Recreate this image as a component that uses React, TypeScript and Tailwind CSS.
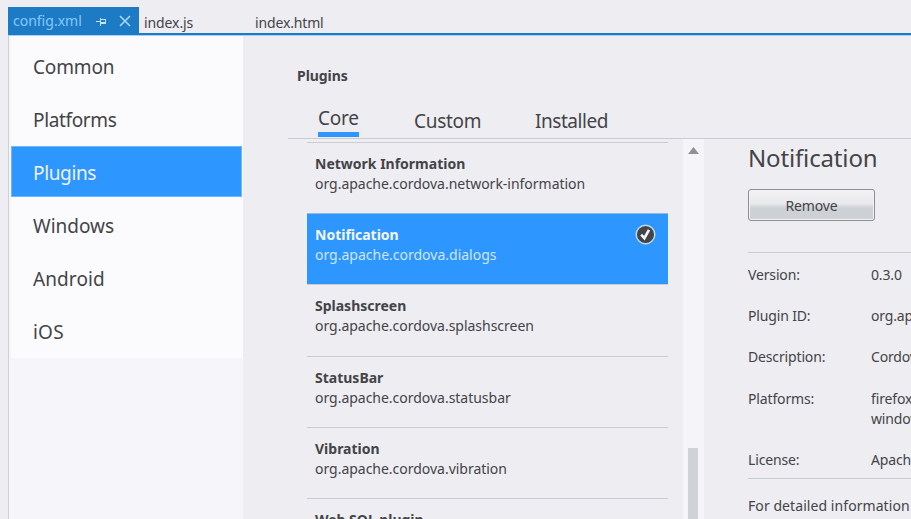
import type { ReactNode } from "react";

const navItems = [
  { label: "Common", spacing: "tracking-[-0.15px]" },
  { label: "Platforms", spacing: "tracking-[-0.35px]" },
  { label: "Plugins", spacing: "tracking-[-0.35px]" },
  { label: "Windows", spacing: "tracking-normal" },
  { label: "Android", spacing: "tracking-[0.1px]" },
  { label: "iOS", spacing: "tracking-[0.2px]" },
];

const plugins = [
  { name: "Network Information", id: "org.apache.cordova.network-information" },
  { name: "Notification", id: "org.apache.cordova.dialogs" },
  { name: "Splashscreen", id: "org.apache.cordova.splashscreen" },
  { name: "StatusBar", id: "org.apache.cordova.statusbar" },
  { name: "Vibration", id: "org.apache.cordova.vibration" },
  { name: "Web SQL plugin", id: "" },
];

function PinIcon() {
  return (
    <svg width="11" height="9" viewBox="0 0 11 9" fill="none" stroke="#c3e3fb" shapeRendering="crispEdges">
      <path d="M0 4.5h4M4.5 0.5v8M5 2.5h5M9.5 2v5M5 5.5h5M5 6.5h5" />
    </svg>
  );
}

function CloseIcon() {
  return (
    <svg width="12" height="12" viewBox="0 0 12 12" fill="none" stroke="#a9d7fb" strokeWidth="1.6">
      <path d="M1 1l10 10M11 1L1 11" />
    </svg>
  );
}

function CheckBadge() {
  return (
    <svg width="21" height="21" viewBox="0 0 21 21">
      <circle cx="10.5" cy="10.5" r="9.3" fill="#434447" stroke="#bfd6e8" strokeWidth="1.5" />
      <path d="M6.2 10.6l3.2 3.6 4.6-8.4" fill="none" stroke="#f4f4f8" strokeWidth="2.7" />
    </svg>
  );
}

function Tabs() {
  return (
    <div className="ml-2 mt-[7px] flex h-[28px] shrink-0 border-b-2 border-[#1c7bc4] text-[14px] leading-[28px]">
      <div className="flex w-[131px] items-center bg-[#1c7bc4] pl-[5px] pt-[2px] text-[#86c8fb]">
        <span className="w-[83px]">config.xml</span>
        <PinIcon />
        <span className="ml-[12px]">
          <CloseIcon />
        </span>
      </div>
      <span className="w-[111px] pl-[5px] pt-[2px] tracking-[-0.1px]">index.js</span>
      <span className="pl-[5px] pt-[2px] tracking-[-0.15px]">index.html</span>
    </div>
  );
}

function Nav() {
  return (
    <nav className="w-[235px] shrink-0 border-l border-[#cfcfd6] bg-[#f6f5f9] pl-[2px]">
      <div className="flex h-[322px] flex-col bg-[#fbfafd] pt-[4px]">
        {navItems.map(({ label, spacing }) => (
          <div key={label} className={spacing}>
            {label === "Plugins" ? (
              <div className="mb-[2px] mr-px flex h-[51px] items-center border border-[#6db7ff] bg-[#2d96ff] pl-[21px] pt-[3px] text-[19px] text-[#f0f2f8]">
                {label}
              </div>
            ) : (
              <div className="flex h-[53px] items-center pl-[22px] pt-[2px] text-[19px]">{label}</div>
            )}
          </div>
        ))}
      </div>
    </nav>
  );
}

function PluginList() {
  return (
    <div className="ml-[19px] mt-[3px] w-[361px] shrink-0">
      {plugins.map((p) => {
        const on = p.name === "Notification";
        return (
          <div
            key={p.name}
            className={
              on
                ? "flex h-[71.2px] justify-between border-t border-[#8fb9e0] bg-[#2d96ff] pl-[8px] pr-[12px] pt-[11px] text-[#f4f6fb]"
                : "flex h-[71.2px] justify-between border-t border-[#c9cdd2] pl-[8px] pt-[11px]"
            }
          >
            <div className="whitespace-nowrap leading-[20px]">
              <div className="text-[14px] font-bold">{p.name}</div>
              <div className={on ? "text-[14px] text-[#cfe5fb]" : "text-[14px] tracking-[-0.02px]"}>{p.id}</div>
            </div>
            {on && (
              <div className="-mt-px">
                <CheckBadge />
              </div>
            )}
          </div>
        );
      })}
    </div>
  );
}

function ScrollBar() {
  return (
    <div className="ml-[15px] flex w-[21px] shrink-0 flex-col bg-[#f5f4f8] pl-[5px]">
      <svg className="mt-[8px] shrink-0" width="11" height="7" viewBox="0 0 11 7">
        <path d="M0 7L5.5 0L11 7z" fill="#909194" />
      </svg>
      <div className="mt-[294px] w-[10px] grow bg-[#cfd2d7]" />
    </div>
  );
}

function Field({ label, children, tall }: { label: string; children: ReactNode; tall?: boolean }) {
  return (
    <div className={tall ? "flex h-[61.5px]" : "flex h-[41.2px]"}>
      <span className="w-[123px] shrink-0">{label}</span>
      <span>{children}</span>
    </div>
  );
}

function Details() {
  return (
    <div className="ml-[44px] w-[400px] shrink-0 whitespace-nowrap text-[14px] leading-[20px] tracking-[-0.15px]">
      <h2 className="mt-px text-[24px] leading-[36px] tracking-[-0.15px]">Notification</h2>
      <button className="mt-[13px] block h-[32px] w-[127px] rounded-[3px] border border-[#8e8f93] bg-linear-to-b from-[#f3f3f6] from-0% via-[#e9e9ec] via-45% to-[#cdd1d5] to-60% pt-px text-[14px] leading-[30px] shadow-[inset_0_0_0_1px_#f3f3f6]">
        Remove
      </button>
      <div className="mt-[31px] h-[227px] border-y border-[#c9cdd2] pt-[12px]">
        <Field label="Version:">0.3.0</Field>
        <Field label="Plugin ID:">org.apache.cordova.dialogs</Field>
        <Field label="Description:">Cordova Notification Plugin</Field>
        <Field label="Platforms:" tall>
          firefoxos
          <br />
          windows8
        </Field>
        <Field label="License:">Apache 2.0</Field>
      </div>
      <p className="mt-[17px] tracking-[0.07px]">For detailed information</p>
    </div>
  );
}

export default function App() {
  return (
    <div className="flex h-[519px] w-[911px] flex-col overflow-hidden bg-[#eeedf2] font-['Noto_Sans','Open_Sans',sans-serif] text-[#434447]">
      <Tabs />
      <div className="ml-2 h-px shrink-0 bg-[#a8d0f0]" />
      <div className="ml-2 flex min-h-0 grow">
        <Nav />
        <main className="ml-[45px] flex w-[623px] min-w-0 flex-col">
          <h1 className="ml-[9px] mt-[30px] text-[14px] font-bold leading-[20px] tracking-[-0.05px]">Plugins</h1>
          <div className="flex h-[53px] shrink-0 items-end border-b border-[#c9cdd2] pl-[30px] text-[19px] leading-[28px]">
            <div className="mb-[1px] h-[33px] w-[41px] border-b-[5px] border-[#2d96ff] tracking-[-0.2px]">Core</div>
            <div className="ml-[55px] mb-[3px] w-[121px] tracking-[-0.3px]">Custom</div>
            <div className="mb-[3px] tracking-[-0.45px]">Installed</div>
          </div>
          <div className="flex min-h-0 grow overflow-hidden">
            <PluginList />
            <ScrollBar />
            <Details />
          </div>
        </main>
      </div>
    </div>
  );
}
